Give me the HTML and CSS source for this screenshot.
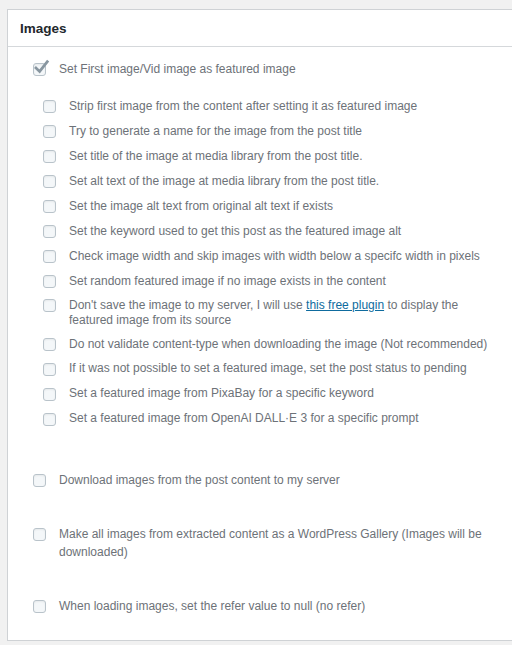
FILE: index.html
```html
<!DOCTYPE html>
<html lang="en">
<head>
<meta charset="utf-8">
<title>Images</title>
<link rel="stylesheet" href="styles.css">
</head>
<body>
<div class="panel">
  <div class="panel-head"><h2 class="title">Images</h2></div>
  <div class="panel-body">
    <div class="opt opt-first">
      <span class="cb checked"><svg class="tick" viewBox="0 0 20 20" width="17" height="17"><path d="M3.5 10.5 L7.8 14.6 L16.8 3.2" fill="none" stroke="#8896a0" stroke-width="3.2" stroke-linecap="square" stroke-linejoin="miter"/></svg></span>
      <span class="lbl">Set First image/Vid image as featured image</span>
    </div>
    <div class="subgroup">
      <div class="sub"><span class="cb"></span><span class="lbl">Strip first image from the content after setting it as featured image</span></div>
      <div class="sub"><span class="cb"></span><span class="lbl">Try to generate a name for the image from the post title</span></div>
      <div class="sub"><span class="cb"></span><span class="lbl">Set title of the image at media library from the post title.</span></div>
      <div class="sub"><span class="cb"></span><span class="lbl">Set alt text of the image at media library from the post title.</span></div>
      <div class="sub"><span class="cb"></span><span class="lbl">Set the image alt text from original alt text if exists</span></div>
      <div class="sub"><span class="cb"></span><span class="lbl">Set the keyword used to get this post as the featured image alt</span></div>
      <div class="sub"><span class="cb"></span><span class="lbl">Check image width and skip images with width below a specifc width in pixels</span></div>
      <div class="sub"><span class="cb"></span><span class="lbl">Set random featured image if no image exists in the content</span></div>
      <div class="sub multi"><span class="cb"></span><span class="lbl">Don't save the image to my server, I will use <a class="link" href="#">this free plugin</a> to display the featured image from its source</span></div>
      <div class="sub"><span class="cb"></span><span class="lbl">Do not validate content-type when downloading the image (Not recommended)</span></div>
      <div class="sub"><span class="cb"></span><span class="lbl">If it was not possible to set a featured image, set the post status to pending</span></div>
      <div class="sub"><span class="cb"></span><span class="lbl">Set a featured image from PixaBay for a specific keyword</span></div>
      <div class="sub"><span class="cb"></span><span class="lbl">Set a featured image from OpenAI DALL·E 3 for a specific prompt</span></div>
    </div>
    <div class="opt opt-main"><span class="cb"></span><span class="lbl">Download images from the post content to my server</span></div>
    <div class="opt opt-main"><span class="cb"></span><span class="lbl">Make all images from extracted content as a WordPress Gallery (Images will be downloaded)</span></div>
    <div class="opt opt-main"><span class="cb"></span><span class="lbl">When loading images, set the refer value to null (no refer)</span></div>
  </div>
</div>
</body>
</html>
```

FILE: styles.css
```css
html, body {
  margin: 0;
  padding: 0;
}
body {
  background: #f1f1f1;
  font-family: "Liberation Sans", Arial, sans-serif;
  font-size: 12px;
  color: #6d7278;
  width: 512px;
  height: 645px;
  overflow: hidden;
}
.panel {
  margin: 9px 0 0 7px;
  background: #ffffff;
  border: 1px solid #cfd2d5;
  border-right: none;
  height: 632px;
  box-sizing: border-box;
}
.panel-head {
  height: 37px;
  box-sizing: border-box;
  border-bottom: 1px solid #d5d8db;
  display: flex;
  align-items: center;
  padding: 0 12px;
}
.title {
  margin: 0;
  font-size: 13.5px;
  font-weight: bold;
  color: #23282d;
  line-height: 1;
  padding-top: 1px;
}
.panel-body {
  padding: 13.5px 0 10px 25px;
}
.opt {
  display: flex;
  align-items: flex-start;
}
.opt .lbl {
  line-height: 17.3px;
  margin-left: 13px;
  padding-right: 18px;
}
.opt .cb {
  margin-top: 2px;
}
.opt-main {
  padding: 18.6px 0;
}
.subgroup {
  margin: 16px 0 21.6px 10px;
}
.sub {
  display: flex;
  align-items: flex-start;
  padding: 2.5px 0;
}
.sub .lbl {
  display: block;
  line-height: 15.3px;
  padding: 2.35px 18px 2.35px 0;
  margin-left: 13px;
}
.sub .cb {
  margin-top: 3.5px;
}
.sub.multi .lbl {
  padding-top: 1.35px;
  padding-bottom: 1.05px;
}
.sub.multi .cb {
  margin-top: 2.5px;
}
.cb {
  flex: 0 0 auto;
  position: relative;
  width: 13px;
  height: 13px;
  box-sizing: border-box;
  border: 1px solid #b9c3ca;
  border-radius: 3px;
  background: #f4f7f9;
  box-shadow: inset 0 1px 2px rgba(0, 0, 0, 0.06);
}
.tick {
  position: absolute;
  left: -1px;
  top: -5px;
}
.link {
  color: #0e6b9e;
  text-decoration: underline;
}
```
